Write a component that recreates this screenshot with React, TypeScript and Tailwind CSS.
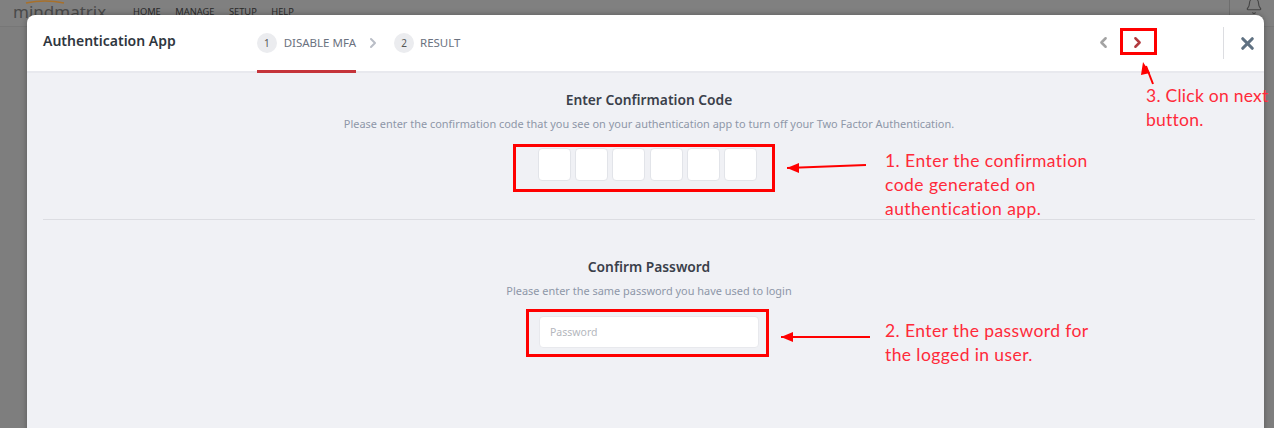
import { Bell, ChevronLeft, ChevronRight, X } from 'lucide-react';

const NAV_ITEMS = ['HOME', 'MANAGE', 'SETUP', 'HELP'];
const CODE_BOXES = [0, 1, 2, 3, 4, 5];

const uiFont = 'font-["Noto_Sans",sans-serif]';
const noteFont = 'font-["Lato",sans-serif]';

function Arrow({ className, d }: { className: string; d: string }) {
  return (
    <svg className={`absolute ${className}`} width="100" height="40" viewBox="0 0 100 40" fill="none">
      <path d={d} stroke="#ff0000" strokeWidth="2" />
    </svg>
  );
}

function TopBar() {
  return (
    <div className="flex h-[27px] items-start border-b border-[#777] bg-[#808080] pl-[13px] pr-[11px]">
      <div className="relative w-[120px]">
        <svg className="absolute left-[12px] top-0" width="40" height="4" viewBox="0 0 40 4" fill="none">
          <path d="M1 3 Q20 -1 39 3" stroke="#a8702a" strokeWidth="1.5" />
        </svg>
        <span className={`${uiFont} block pt-[1px] text-[17px] leading-[22px] text-[#4a4a4a]`}>mindmatrix</span>
      </div>
      <div className={`${uiFont} flex gap-[14.5px] pt-[5px] text-[9.3px] leading-[13px] text-[#2b2b2b]`}>
        {NAV_ITEMS.map((item) => (
          <span key={item}>{item}</span>
        ))}
      </div>
      <div className="ml-auto flex h-[15px] border-l border-[#6e6e6e] pl-[15px]">
        <Bell size={18} strokeWidth={1.5} className="-mt-[3px] text-[#444]" />
      </div>
    </div>
  );
}

function Header() {
  return (
    <div className="flex h-[58px] items-start border-b-2 border-[#e8e9ee] bg-white pl-4 pr-[7px]">
      <h1 className={`${uiFont} w-[214px] pt-[16px] text-[14px] font-semibold leading-5 text-[#2f3640]`}>Authentication App</h1>
      <div className={`${uiFont} flex h-[58px] items-start whitespace-nowrap text-[11.5px] text-[#6b7280]`}>
        <div className="flex h-[58px] w-[99px] items-start gap-[7px] border-b-[3px] border-[#c5343a] pt-[18px]">
          <span className="flex h-5 w-5 items-center justify-center rounded-full bg-[#ebecef] text-[10px] text-[#555]">1</span>
          <span className="leading-5">DISABLE MFA</span>
        </div>
        <ChevronRight size={16} strokeWidth={3} className="ml-[9px] mr-[13px] mt-[20px] text-[#b9bdc6]" />
        <div className="flex items-start gap-[6px] pt-[18px]">
          <span className="flex h-5 w-5 items-center justify-center rounded-full bg-[#ebecef] text-[10px] text-[#555]">2</span>
          <span className="leading-5">RESULT</span>
        </div>
      </div>
      <div className="ml-auto flex items-start">
        <ChevronLeft size={17} strokeWidth={3.5} className="mt-[19px] text-[#a3a3a3]" />
        <ChevronRight size={17} strokeWidth={3.5} className="ml-[17px] mt-[19px] text-[#b23a3f]" />
        <div className="ml-[77px] mt-[12px] flex h-8 items-center border-l border-[#dcdde1] pl-[14px]">
          <X size={19} strokeWidth={4} className="text-[#5f7182]" />
        </div>
      </div>
    </div>
  );
}

function Body() {
  return (
    <div className={`${uiFont} h-[400px] bg-[#f0f1f5] pl-4 pr-[9px] text-center`}>
      <div className="h-[147px] border-b border-[#dcdde2] pt-[17px]">
        <h2 className="text-[13.8px] font-semibold leading-5 text-[#3a404a]">Enter Confirmation Code</h2>
        <p className="mt-[6px] text-[10.95px] leading-4 text-[#8e97a8]">
          Please enter the confirmation code that you see on your authentication app to turn off your Two Factor Authentication.
        </p>
        <div className="mt-[16px] flex justify-center gap-[4.4px] pr-[3px]">
          {CODE_BOXES.map((box) => (
            <div key={box} className="h-[33px] w-[33px] rounded-[4px] border border-[#e2e4e9] bg-white" />
          ))}
        </div>
      </div>
      <div className="pt-[37px]">
        <h2 className="text-[13.8px] font-semibold leading-5 text-[#3a404a]">Confirm Password</h2>
        <p className="mt-[6px] text-[10.95px] leading-4 text-[#8e97a8]">Please enter the same password you have used to login</p>
        <div className="mt-[17px] flex justify-center">
          <input
            placeholder="Password"
            readOnly
            className="h-[32px] w-[220px] rounded-[4px] border border-[#e8e9ed] bg-white px-[10px] text-[10.5px] outline-none placeholder:text-[#b4b7bd]"
          />
        </div>
      </div>
    </div>
  );
}

export default function App() {
  return (
    <div className="relative h-[428px] w-[1274px] overflow-hidden bg-[#7e7e7e]">
      <TopBar />
      <div className="absolute left-[27px] top-[15px] w-[1237px] overflow-hidden rounded-t-[8px] shadow-[0_0_6px_rgba(0,0,0,0.3)]">
        <Header />
        <Body />
      </div>

      {/* annotations drawn on top of the screenshot */}
      <div className="absolute left-[1120px] top-[28px] h-[27px] w-[37px] border-[3px] border-[#ff0000]" />
      <div className="absolute left-[513px] top-[144px] h-[48px] w-[262px] border-[3px] border-[#ff0000]" />
      <div className="absolute left-[526px] top-[309px] h-[48px] w-[243px] border-[3px] border-[#ff0000]" />
      <Arrow className="left-[787px] top-[150px]" d="M0 18 L79 15" />
      <Arrow className="left-[781px] top-[320px]" d="M0 17 L89 17" />
      <Arrow className="left-[1130px] top-[60px]" d="M23 24 L16 6" />
      <svg className="absolute left-[787px] top-[162px]" width="14" height="12" viewBox="0 0 14 12">
        <path d="M0 6 L12 1 L12 11 Z" fill="#ff0000" />
      </svg>
      <svg className="absolute left-[781px] top-[331px]" width="14" height="12" viewBox="0 0 14 12">
        <path d="M0 6 L12 1 L12 11 Z" fill="#ff0000" />
      </svg>
      <svg className="absolute left-[1140px] top-[62px]" width="14" height="14" viewBox="0 0 14 14">
        <path d="M3 0 L10 11 L1 13 Z" fill="#ff0000" />
      </svg>
      <p className={`${noteFont} absolute left-[885px] top-[149px] w-[230px] text-[17.5px] leading-[24px] tracking-[0.45px] text-[#ff2a3a]`}>
        1. Enter the confirmation
        <br />
        code generated on
        <br />
        authentication app.
      </p>
      <p className={`${noteFont} absolute left-[885px] top-[319px] w-[230px] text-[17.5px] leading-[24px] tracking-[0.4px] text-[#ff2a3a]`}>
        2. Enter the password for
        <br />
        the logged in user.
      </p>
      <p className={`${noteFont} absolute left-[1146px] top-[84px] w-[128px] text-[17.5px] leading-[24px] tracking-[0.25px] text-[#ff2a3a]`}>
        3. Click on next
        <br />
        button.
      </p>
    </div>
  );
}
